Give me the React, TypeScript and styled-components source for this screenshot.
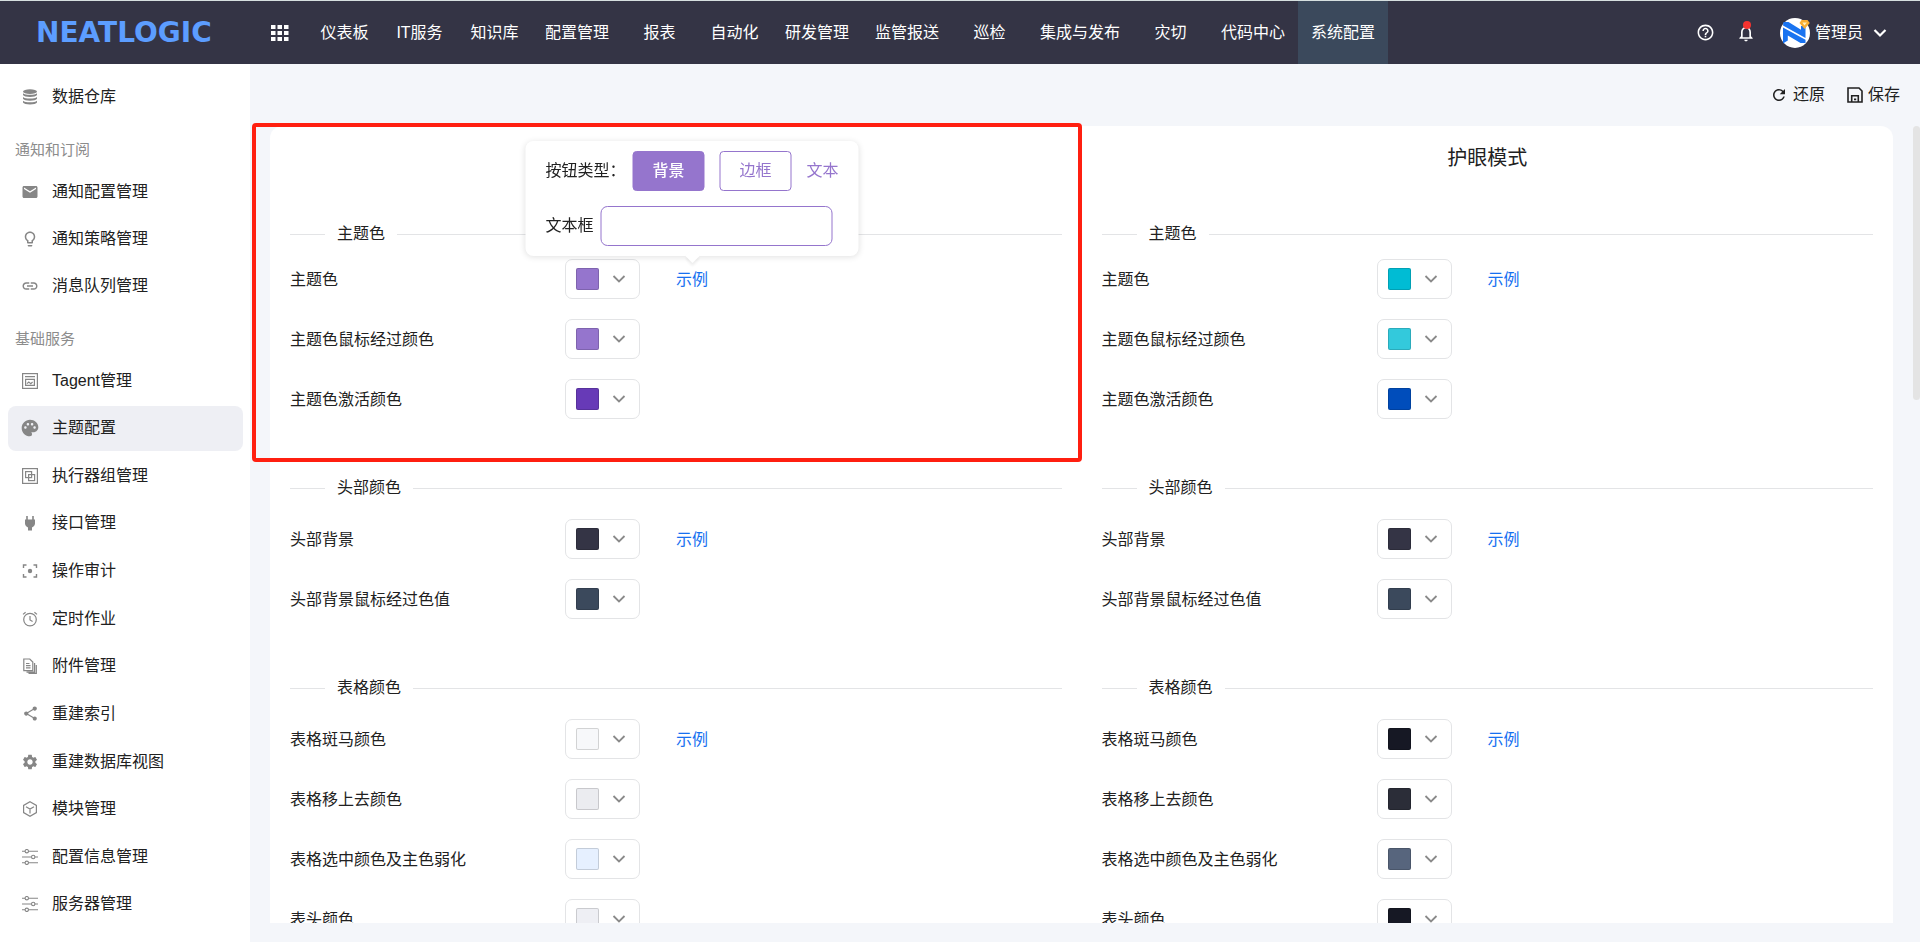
import React from 'react';
import styled, { createGlobalStyle, css } from 'styled-components';
import {
  MdEmail,
  MdLightbulbOutline,
  MdLink,
  MdPalette,
  MdSettings,
  MdShare,
  MdHelpOutline,
  MdNotificationsNone,
  MdRefresh,
} from 'react-icons/md';

const color = {
  header: '#343445',
  headerActive: '#3b495c',
  page: '#f4f6fa',
  text: '#212121',
  muted: '#8c8c8c',
  line: '#e3e4e6',
  link: '#1670f0',
  primary: '#9575cd',
};

const GlobalStyle = createGlobalStyle`
  *, *::before, *::after { box-sizing: border-box; }
  body {
    margin: 0;
    background: ${color.page};
    color: ${color.text};
    font: 16px/24px "Liberation Sans", "Noto Sans CJK SC", sans-serif;
  }
  button, input { font: inherit; color: inherit; }
  button { padding: 0; border: 0; background: none; cursor: pointer; }
  a { color: inherit; text-decoration: none; }
  ul { margin: 0; padding: 0; list-style: none; }
  h2, h3 { margin: 0; font-weight: 400; }
  svg { display: block; flex: none; }
`;

const Page = styled.div`
  display: flex;
  flex-direction: column;
  height: 100vh;
`;

/* ---------- header ---------- */

const Header = styled.header`
  display: flex;
  align-items: stretch;
  flex: none;
  height: 64px;
  border-top: 1px solid #d6dfdf;
  background: ${color.header};
  color: #fff;
`;

const Logo = styled.a`
  display: flex;
  align-items: center;
  width: 234px;
  padding-left: 36px;
  color: #5c9dff;
  font: bold 28px/32px 'DejaVu Sans', sans-serif;
`;

const AppsButton = styled.button`
  display: flex;
  align-items: center;
  justify-content: center;
  width: 92px;
  color: #fff;
`;

const HeaderNav = styled.nav`
  display: flex;
  flex: 1;
  margin-left: -19px;
`;

const HeaderLink = styled.a<{ $active?: boolean }>`
  display: flex;
  align-items: center;
  justify-content: center;
  min-width: 75px;
  padding: 0 13px;
  white-space: nowrap;
  ${(p) => p.$active && css`background: ${color.headerActive};`}
`;

const HeaderTools = styled.div`
  display: flex;
  align-items: center;
  padding-right: 33px;
`;

const ToolButton = styled.button`
  position: relative;
  display: flex;
  align-items: center;
  justify-content: center;
  width: 20px;
  height: 40px;
  margin-right: 20px;
  color: #fff;
`;

const Dot = styled.span`
  position: absolute;
  top: 8px;
  right: 5px;
  width: 8px;
  height: 8px;
  border-radius: 50%;
  background: #f5332f;
`;

const UserButton = styled.button`
  display: flex;
  align-items: center;
  gap: 5px;
  margin-left: 4px;
  color: #fff;
  & > svg:last-child { margin-left: 5px; }
`;

/* ---------- sidebar ---------- */

const Body = styled.div`
  display: flex;
  flex: 1;
  min-height: 0;
`;

const Sidebar = styled.aside`
  display: flex;
  flex-direction: column;
  flex: none;
  width: 250px;
  padding: 10px 7px 15px 8px;
  background: #fff;
  overflow: auto;
`;

const MenuList = styled.ul<{ $fill?: boolean }>`
  display: flex;
  flex-direction: column;
  gap: 2px;
  ${(p) => p.$fill && css`flex: 1; justify-content: space-between;`}
`;

const MenuLink = styled.a<{ $active?: boolean }>`
  display: flex;
  align-items: center;
  gap: 13px;
  height: 45px;
  padding-left: 13px;
  border-radius: 8px;
  ${(p) => p.$active && css`background: #eeeff4;`}
  svg { color: #868686; }
`;

const MenuTitle = styled.h3`
  padding: 19px 7px 7px;
  color: ${color.muted};
  font-size: 15px;
  line-height: 24px;
`;

/* ---------- main ---------- */

const Main = styled.main`
  position: relative;
  display: flex;
  flex: 1;
  flex-direction: column;
  min-width: 0;
  padding: 0 27px 19px 20px;
`;

const Toolbar = styled.div`
  display: flex;
  flex: none;
  align-items: center;
  justify-content: flex-end;
  gap: 22px;
  height: 62px;
  margin-right: -7px;
`;

const ActionButton = styled.button`
  display: flex;
  align-items: center;
  gap: 5px;
`;

const PanelFrame = styled.div`
  position: relative;
  flex: 1;
  min-height: 0;
`;

const Panel = styled.div`
  display: grid;
  grid-template-columns: 1fr 1fr;
  gap: 40px;
  height: 100%;
  padding: 16px 20px 0;
  border-radius: 12px 12px 0 0;
  background: #fff;
  overflow: hidden auto;
  scrollbar-width: none;
`;

const Highlight = styled.div`
  position: absolute;
  top: -3px;
  left: -18px;
  width: calc(50% + 18px);
  height: 339px;
  border: 4px solid #ff1f10;
  border-radius: 4px;
  pointer-events: none;
`;

const ScrollThumb = styled.div`
  position: absolute;
  top: 62px;
  right: 0;
  width: 7px;
  height: 274px;
  border-radius: 4px;
  background: #e4e4e4;
`;

const ModeTitle = styled.h2`
  height: 32px;
  font-size: 20px;
  line-height: 32px;
  text-align: center;
`;

const Section = styled.section`
  margin-top: 57px;
  h2 + & { margin-top: 48px; }
`;

const SectionTitle = styled.h3`
  display: flex;
  align-items: center;
  gap: 12px;
  margin-bottom: 19px;
  font-size: 16px;
  line-height: 24px;
  h2 + section > & { margin-bottom: 13px; }
  &::before, &::after {
    content: '';
    height: 1px;
    background: ${color.line};
  }
  &::before { width: 35px; }
  &::after { flex: 1; }
`;

const Rows = styled.ul`
  display: flex;
  flex-direction: column;
  gap: 20px;
`;

const Row = styled.li`
  display: flex;
  align-items: center;
  height: 40px;
`;

const RowLabel = styled.span`
  width: 275px;
  padding-top: 2px;
`;

const Picker = styled.button`
  display: flex;
  align-items: center;
  justify-content: space-between;
  width: 75px;
  height: 40px;
  padding: 0 13px 0 10px;
  border: 1px solid ${color.line};
  border-radius: 7px;
  background: #fff;
  color: #8a8a8a;
`;

const Swatch = styled.span<{ $color: string }>`
  width: 23px;
  height: 22px;
  border-radius: 2px;
  background: ${(p) => p.$color};
  box-shadow: inset 0 0 0 1px rgba(0, 0, 0, 0.15);
`;

const Example = styled.div`
  position: relative;
  margin-left: 36px;
  padding-top: 2px;
`;

const ExampleLink = styled.a`
  display: block;
  color: ${color.link};
`;

/* ---------- example popover ---------- */

const Popover = styled.div`
  position: absolute;
  z-index: 1;
  bottom: 36px;
  left: 50%;
  display: flex;
  flex-direction: column;
  gap: 15px;
  width: 333px;
  padding: 10px 20px;
  border-radius: 8px;
  background: #fff;
  box-shadow: 0 1px 6px rgba(0, 0, 0, 0.12);
  transform: translateX(-50%);
  &::after {
    content: '';
    position: absolute;
    bottom: -5px;
    left: 50%;
    width: 10px;
    height: 10px;
    margin-left: -5px;
    background: #fff;
    box-shadow: 2px 2px 3px rgba(0, 0, 0, 0.08);
    transform: rotate(45deg);
  }
`;

const PopoverRow = styled.div`
  display: flex;
  align-items: center;
  height: 40px;
  white-space: nowrap;
`;

const PopoverLabel = styled.label`
  margin-right: 7px;
`;

const DemoButton = styled.button<{ $kind: 'fill' | 'outline' | 'text' }>`
  color: ${color.primary};
  ${(p) =>
    p.$kind !== 'text' &&
    css`
      width: 72px;
      height: 40px;
      margin-right: 15px;
      border: 1px solid ${color.primary};
      border-radius: 4px;
    `}
  ${(p) => p.$kind === 'fill' && css`background: ${color.primary}; color: #fff; font-weight: 500;`}
`;

const DemoInput = styled.input`
  flex: 1;
  min-width: 0;
  height: 40px;
  margin-right: 6px;
  padding: 0 10px;
  border: 1px solid ${color.primary};
  border-radius: 7px;
  outline: none;
  background: #fff;
`;

/* ---------- icons ---------- */

const Line = ({ children, size = 16, width = 1.2 }: { children: React.ReactNode; size?: number; width?: number }) => (
  <svg width={size} height={size} viewBox="0 0 16 16" fill="none" stroke="currentColor" strokeWidth={width}>
    {children}
  </svg>
);

const Chevron = ({ width = 1.8 }: { width?: number }) => (
  <svg width="14" height="10" viewBox="0 0 14 10" fill="none" stroke="currentColor" strokeWidth={width}>
    <path d="M1.500 2l5.500 5.500L12.500 2" />
  </svg>
);

const AppsIcon = () => (
  <svg width="18" height="16" viewBox="0 0 18 16" fill="currentColor">
    {[0, 6, 12].map((y) => [0, 6.5, 13].map((x) => <rect key={`${x}-${y}`} x={x} y={y} width="4.500" height="4" />))}
  </svg>
);

const DatabaseIcon = () => (
  <svg width="16" height="16" viewBox="0 0 16 16" fill="currentColor">
    <ellipse cx="8" cy="2.600" rx="7" ry="2.300" />
    <path d="M1 4.200c2 2 12 2 14 0v1.800c-1 2.500-13 2.500-14 0zM1 8c2 2 12 2 14 0v1.800c-1 2.500-13 2.500-14 0zM1 11.800c2 2 12 2 14 0v1.800c-1 2.500-13 2.500-14 0z" />
  </svg>
);

const AgentIcon = () => (
  <Line>
    <rect x="0.600" y="0.600" width="14.800" height="14.800" />
    <path d="M3 3.600h10M3.600 6.400h8.800v6H3.600zM5 10.600l1.800-1.600 2 1.600 1.800-1.600" />
  </Line>
);

const GroupIcon = () => (
  <Line>
    <rect x="0.600" y="0.600" width="14.800" height="14.800" />
    <rect x="3.600" y="3.600" width="6" height="6" />
    <rect x="6.600" y="6.600" width="6" height="6" />
  </Line>
);

const PlugIcon = () => (
  <svg width="16" height="16" viewBox="0 0 16 16" fill="currentColor">
    <path d="M4.200 1h1.600v3.400h4.400V1h1.600v3.400H13v4.200c0 2-1.500 3.300-3 4V15.500H6v-2.900c-1.500-.7-3-2-3-4V4.400h1.200z" />
  </svg>
);

const AuditIcon = () => (
  <Line width={1.4}>
    <path d="M1.500 5V2h3M11.500 2h3v3M14.500 11v3h-3M4.500 14h-3v-3" />
    <circle cx="8" cy="8" r="2.200" fill="currentColor" stroke="none" />
  </Line>
);

const AlarmIcon = () => (
  <Line>
    <circle cx="8" cy="8.600" r="6.300" />
    <path d="M8 5v4l2.600 1.600M1 3.400l2.600-2.200M15 3.400l-2.600-2.200" />
  </Line>
);

const FileIcon = () => (
  <Line>
    <path d="M1.800 1h6l3 3v8.600h-9zM4 5.500h3.500M4 7.700h4.500M4 9.900h4.500M12.600 5v9.200H4.500M14.300 7v8.400H6.500" />
  </Line>
);

const CubeIcon = () => (
  <Line>
    <path d="M8 .8l6.400 3.600v7.200L8 15.200l-6.400-3.600V4.400zM4 5.800l4 2.300 4-2.300M8 8v4.600" />
  </Line>
);

const SlidersIcon = () => (
  <Line width={1.1}>
    <path d="M0 2.200h3M6.600 2.200H16M0 8h9.400M13 8h3M0 13.800h3M6.600 13.800H16" />
    <circle cx="4.800" cy="2.200" r="1.700" />
    <circle cx="11.200" cy="8" r="1.700" />
    <circle cx="4.800" cy="13.800" r="1.700" />
  </Line>
);

const SaveIcon = () => (
  <Line width={1.6}>
    <path d="M1 1h11l3 3v11H1zM4.700 15V8.800h6.600V15M7 12.400h2.200" />
  </Line>
);

const Avatar = () => (
  <svg width="30" height="30" viewBox="0 0 30 30">
    <circle cx="15" cy="15" r="15" fill="#fff" />
    <path d="M3.500 4h5L21 11.800V8h4.500v12L3 7.500z" fill="#1a73f0" />
    <path d="M3 9.500l22.500 12.300V25h-5L7.800 17.500v5L3 25.500z" fill="#1a73f0" />
    <path d="M21.500 2h6l2.300 3-5.300 6-5-6z" fill="#f9ae32" />
    <path d="M22.300 4.500h4.600l-2.400 3z" fill="#fff0bd" />
  </svg>
);

/* ---------- data ---------- */

const headerItems = [
  '仪表板', 'IT服务', '知识库', '配置管理', '报表', '自动化', '研发管理',
  '监管报送', '巡检', '集成与发布', '灾切', '代码中心', '系统配置',
];

type MenuItem = { label: string; icon: React.ReactNode };

const noticeMenu: MenuItem[] = [
  { label: '通知配置管理', icon: <MdEmail size={18} /> },
  { label: '通知策略管理', icon: <MdLightbulbOutline size={18} /> },
  { label: '消息队列管理', icon: <MdLink size={18} /> },
];

const serviceMenu: MenuItem[] = [
  { label: 'Tagent管理', icon: <AgentIcon /> },
  { label: '主题配置', icon: <MdPalette size={20} /> },
  { label: '执行器组管理', icon: <GroupIcon /> },
  { label: '接口管理', icon: <PlugIcon /> },
  { label: '操作审计', icon: <AuditIcon /> },
  { label: '定时作业', icon: <AlarmIcon /> },
  { label: '附件管理', icon: <FileIcon /> },
  { label: '重建索引', icon: <MdShare size={17} /> },
  { label: '重建数据库视图', icon: <MdSettings size={18} /> },
  { label: '模块管理', icon: <CubeIcon /> },
  { label: '配置信息管理', icon: <SlidersIcon /> },
  { label: '服务器管理', icon: <SlidersIcon /> },
];

const IconSlot = styled.span`
  display: flex;
  align-items: center;
  justify-content: center;
  width: 18px;
`;

const sections = [
  {
    title: '主题色',
    rows: [
      { label: '主题色', colors: ['#9575cd', '#00bcd4'] },
      { label: '主题色鼠标经过颜色', colors: ['#9575cd', '#33c9dc'] },
      { label: '主题色激活颜色', colors: ['#673ab7', '#004dbb'] },
    ],
  },
  {
    title: '头部颜色',
    rows: [
      { label: '头部背景', colors: ['#343445', '#343445'] },
      { label: '头部背景鼠标经过色值', colors: ['#3b495c', '#3b495c'] },
    ],
  },
  {
    title: '表格颜色',
    rows: [
      { label: '表格斑马颜色', colors: ['#f7f8fa', '#161824'] },
      { label: '表格移上去颜色', colors: ['#ebecf0', '#2b2d38'] },
      { label: '表格选中颜色及主色弱化', colors: ['#e6f0ff', '#57657d'] },
      { label: '表头颜色', colors: ['#eeeff4', '#161824'] },
    ],
  },
];

/* ---------- composed parts ---------- */

const Menu = ({ items, active, fill }: { items: MenuItem[]; active?: string; fill?: boolean }) => (
  <MenuList $fill={fill}>
    {items.map(({ label, icon }) => (
      <li key={label}>
        <MenuLink href="#" $active={label === active}>
          <IconSlot>{icon}</IconSlot>
          {label}
        </MenuLink>
      </li>
    ))}
  </MenuList>
);

const ExamplePopover = () => (
  <Popover>
    <PopoverRow>
      <PopoverLabel as="span">按钮类型：</PopoverLabel>
      <DemoButton type="button" $kind="fill">背景</DemoButton>
      <DemoButton type="button" $kind="outline">边框</DemoButton>
      <DemoButton type="button" $kind="text">文本</DemoButton>
    </PopoverRow>
    <PopoverRow>
      <PopoverLabel htmlFor="demo-input">文本框</PopoverLabel>
      <DemoInput id="demo-input" type="text" />
    </PopoverRow>
  </Popover>
);

const ThemeColumn = ({ mode, title, popover }: { mode: number; title?: string; popover?: boolean }) => (
  <div>
    <ModeTitle>{title}</ModeTitle>
    {sections.map((section, s) => (
      <Section key={section.title}>
        <SectionTitle>{section.title}</SectionTitle>
        <Rows>
          {section.rows.map((row, r) => (
            <Row key={row.label}>
              <RowLabel>{row.label}</RowLabel>
              <Picker type="button" aria-label={row.label} aria-haspopup="dialog">
                <Swatch $color={row.colors[mode]} />
                <Chevron />
              </Picker>
              {r === 0 && (
                <Example>
                  <ExampleLink href="#">示例</ExampleLink>
                  {popover && s === 0 && <ExamplePopover />}
                </Example>
              )}
            </Row>
          ))}
        </Rows>
      </Section>
    ))}
  </div>
);

export default function App() {
  return (
    <Page lang="zh-CN">
      <GlobalStyle />
      <Header>
        <Logo href="#">NEATLOGIC</Logo>
        <AppsButton type="button" aria-label="应用"><AppsIcon /></AppsButton>
        <HeaderNav>
          {headerItems.map((label) => (
            <HeaderLink key={label} href="#" $active={label === '系统配置'}>{label}</HeaderLink>
          ))}
        </HeaderNav>
        <HeaderTools>
          <ToolButton type="button" aria-label="帮助"><MdHelpOutline size={19} /></ToolButton>
          <ToolButton type="button" aria-label="通知">
            <MdNotificationsNone size={20} />
            <Dot />
          </ToolButton>
          <UserButton type="button">
            <Avatar />
            管理员
            <Chevron width={2.2} />
          </UserButton>
        </HeaderTools>
      </Header>
      <Body>
        <Sidebar>
          <Menu items={[{ label: '数据仓库', icon: <DatabaseIcon /> }]} />
          <MenuTitle>通知和订阅</MenuTitle>
          <Menu items={noticeMenu} />
          <MenuTitle>基础服务</MenuTitle>
          <Menu items={serviceMenu} active="主题配置" fill />
        </Sidebar>
        <Main>
          <Toolbar>
            <ActionButton type="button"><MdRefresh size={18} />还原</ActionButton>
            <ActionButton type="button"><SaveIcon />保存</ActionButton>
          </Toolbar>
          <PanelFrame>
            <Panel>
              <ThemeColumn mode={0} popover />
              <ThemeColumn mode={1} title="护眼模式" />
            </Panel>
            <Highlight />
          </PanelFrame>
          <ScrollThumb />
        </Main>
      </Body>
    </Page>
  );
}
